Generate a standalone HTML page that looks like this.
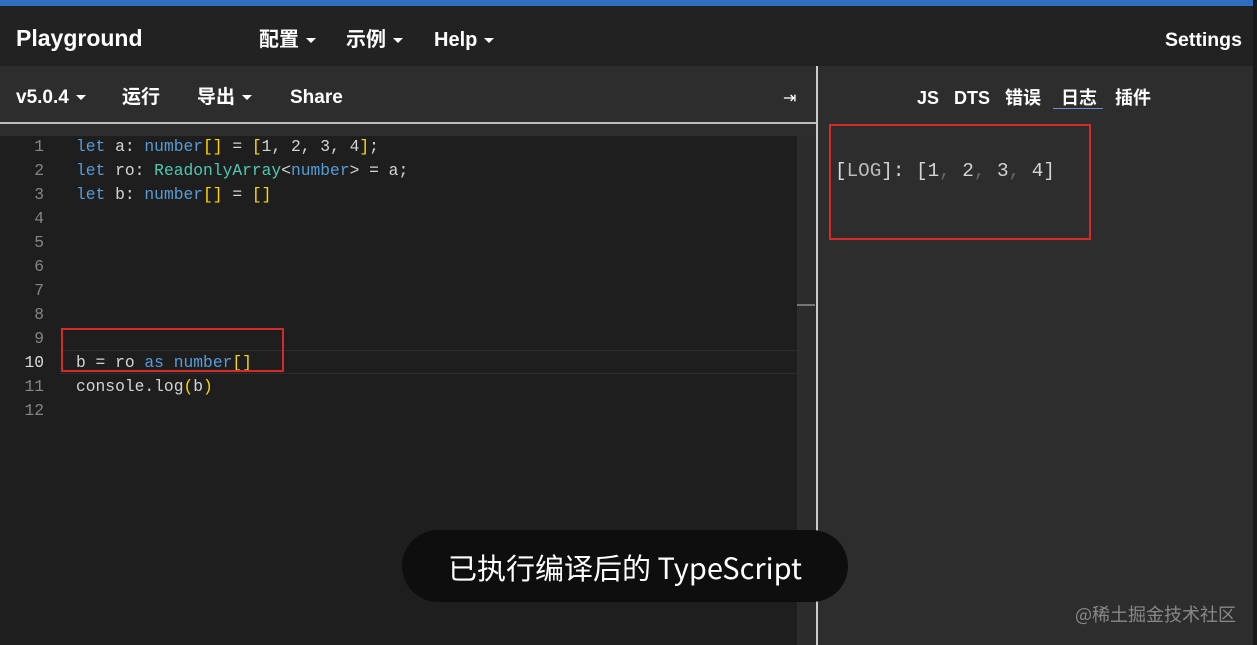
<!DOCTYPE html>
<html><head><meta charset="utf-8"><style>
*{margin:0;padding:0;box-sizing:border-box}
body{width:1257px;height:645px;overflow:hidden;background:#1e1e1e;font-family:"Liberation Sans","Noto Sans CJK SC",sans-serif;position:relative;color:#fff}
.abs{position:absolute}
.nav{font-weight:bold;font-size:20px;color:#fff;white-space:nowrap;line-height:24px;height:24px}
.nav span.c{display:inline-block;line-height:24px;vertical-align:top}
.car{display:inline-block;width:0;height:0;border-left:5px solid transparent;border-right:5px solid transparent;border-top:5px solid #fff;vertical-align:middle;margin-left:7px}
.code{font-family:"Liberation Mono",monospace;font-size:16.3px;color:#d4d4d4;white-space:pre;line-height:24px}
.ln{font-family:"Liberation Mono",monospace;font-size:16.3px;color:#858585;line-height:24px;text-align:right;width:44px}
.k{color:#569cd6}.t{color:#4ec9b0}.y{color:#ffd700}
</style></head><body>
<div class="abs" style="left:0;top:0;width:1257px;height:6px;background:#2f6fc2"></div>
<div class="abs" style="left:0;top:6px;width:1253px;height:60px;background:#222"></div>
<div class="abs" style="left:1253px;top:0;width:4px;height:645px;background:#1a1a1a"></div>
<div class="abs nav" style="left:16px;top:26px;font-size:23px">Playground</div>
<div class="abs nav" style="left:259px;top:28px"><span class="c">配置</span><span class="car"></span></div>
<div class="abs nav" style="left:346px;top:28px"><span class="c">示例</span><span class="car"></span></div>
<div class="abs nav" style="left:434px;top:28px">Help<span class="car"></span></div>
<div class="abs nav" style="left:1165px;top:28px;font-size:19.5px">Settings</div>
<div class="abs" style="left:0;top:66px;width:816px;height:56px;background:#2d2d2d"></div>
<div class="abs" style="left:0;top:122px;width:816px;height:2px;background:#bbb"></div>
<div class="abs" style="left:0;top:124px;width:816px;height:12px;background:#2d2d2d"></div>
<div class="abs nav" style="left:16px;top:86px;font-size:19px">v5.0.4<span class="car"></span></div>
<div class="abs nav" style="left:122px;top:86px;font-size:19px"><span class="c">运行</span></div>
<div class="abs nav" style="left:197px;top:86px;font-size:19px"><span class="c">导出</span><span class="car"></span></div>
<div class="abs nav" style="left:290px;top:86px;font-size:19px">Share</div>
<div class="abs" style="left:783px;top:88px;font-size:16px;color:#fff">⇥</div>
<div class="abs" style="left:816px;top:66px;width:2px;height:579px;background:#ccc"></div>
<div class="abs" style="left:818px;top:66px;width:435px;height:579px;background:#2d2d2d"></div>
<div class="abs nav" style="left:917px;top:86px;font-size:18px">JS</div>
<div class="abs nav" style="left:954px;top:86px;font-size:18px">DTS</div>
<div class="abs nav" style="left:1005px;top:86px;font-size:18px"><span class="c">错误</span></div>
<div class="abs nav" style="left:1061px;top:86px;font-size:18px"><span class="c">日志</span></div>
<div class="abs" style="left:1053px;top:108px;width:50px;height:1px;background:#6a8fcf"></div>
<div class="abs nav" style="left:1115px;top:86px;font-size:18px"><span class="c">插件</span></div>
<div class="abs" style="left:829px;top:124px;width:262px;height:116px;border:2px solid #d42a2a"></div>
<div class="abs code" style="left:835px;top:159px;font-size:19.3px"><span style="color:#ddd">[</span><span style="color:#bbb">LOG</span>]: [1<span style="color:#666">,</span> 2<span style="color:#666">,</span> 3<span style="color:#666">,</span> 4]</div>
<div class="abs" style="left:797px;top:136px;width:19px;height:509px;background:#2c2c2c"></div>
<div class="abs" style="left:797px;top:304px;width:18px;height:2px;background:#777"></div>
<div class="abs" style="left:60px;top:350px;width:737px;height:24px;border-top:1px solid #2d2d2d;border-bottom:1px solid #2d2d2d"></div>
<div class="abs ln" style="left:0;top:135px">1<br>2<br>3<br>4<br>5<br>6<br>7<br>8<br>9<br><span style="color:#ddd">10</span><br>11<br>12</div>
<div class="abs code" style="left:76px;top:135px"><span class="k">let</span> a: <span class="k">number</span><span class="y">[]</span> = <span class="y">[</span>1, 2, 3, 4<span class="y">]</span>;
<span class="k">let</span> ro: <span class="t">ReadonlyArray</span>&lt;<span class="k">number</span>&gt; = a;
<span class="k">let</span> b: <span class="k">number</span><span class="y">[]</span> = <span class="y">[]</span>






b = ro <span class="k">as</span> <span class="k">number</span><span class="y">[]</span>
console.log<span class="y">(</span>b<span class="y">)</span>
</div>
<div class="abs" style="left:61px;top:328px;width:223px;height:44px;border:2px solid #d42a2a"></div>
<div class="abs" style="left:402px;top:530px;width:446px;height:72px;border-radius:36px;background:#0e0e0e"></div>
<div class="abs" style="left:402px;top:549px;width:446px;text-align:center;font-size:29px;color:#fff;font-family:'Noto Sans CJK SC','Liberation Sans',sans-serif;line-height:36px;white-space:nowrap">已执行编译后的 TypeScript</div>
<div class="abs" style="left:1075px;top:601px;font-size:18px;color:#888;font-family:'Noto Sans CJK SC',sans-serif;white-space:nowrap">@稀土掘金技术社区</div>
</body></html>
